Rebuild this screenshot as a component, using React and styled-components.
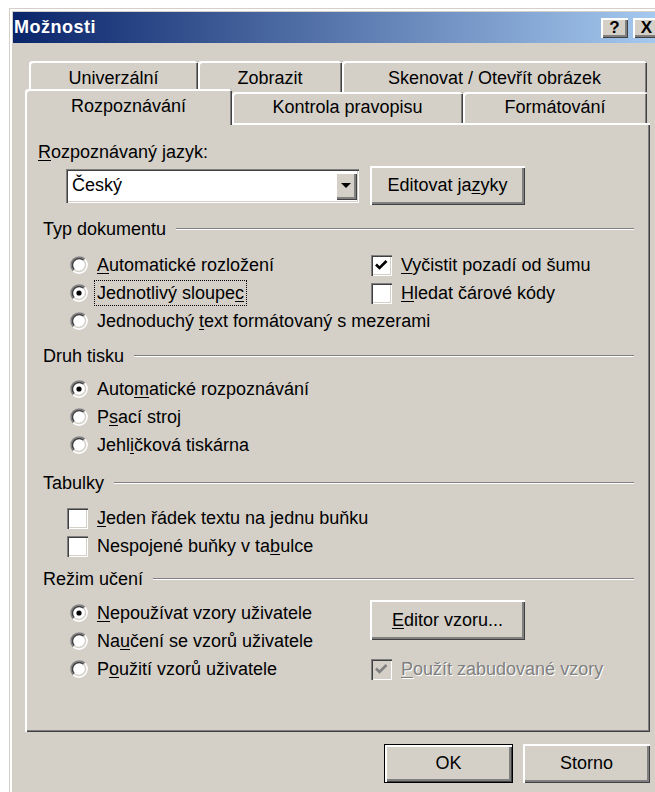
import React from 'react';
import styled, { createGlobalStyle } from 'styled-components';

const face = '#d4d0c8';
const shadow = '#808080';
const darkShadow = '#404040';

const GlobalStyle = createGlobalStyle`
  html, body {
    margin: 0;
    background: #fff;
    overflow: hidden;
  }

  body {
    font-family: "Liberation Sans", Arial, sans-serif;
    font-size: 18px;
    color: #000;
  }
`;

const raised = `
  box-shadow:
    inset 2px 2px 0 #fff,
    inset -1px -1px 0 ${darkShadow},
    inset -3px -3px 0 ${shadow};
`;

const sunken = `
  box-shadow:
    inset 1px 1px 0 ${shadow},
    inset 2px 2px 0 ${darkShadow},
    inset -1px -1px 0 #fff,
    inset -2px -2px 0 ${face};
`;

const Window = styled.div`
  width: 656px;
  height: 800px;
  margin: 8px 0 0 9px;
  box-sizing: border-box;
  border-top: 1px solid ${face};
  border-left: 1px solid ${face};
  box-shadow: inset 2px 2px 0 #fff;
  background: ${face};
  padding: 3px 3px 0 3px;
  display: flex;
  flex-direction: column;
`;

const TitleBar = styled.div`
  height: 31px;
  display: flex;
  align-items: center;
  padding: 0 2px 0 1px;
  background: linear-gradient(to right, #0a246a, #a6caf0);
  color: #fff;
  font-weight: bold;
`;

const Title = styled.span`
  flex: 1;
  letter-spacing: 0.5px;
`;

const CaptionButton = styled.div`
  width: 27px;
  height: 20px;
  margin-left: ${({ $gap }) => $gap || 0}px;
  display: flex;
  align-items: center;
  justify-content: center;
  background: ${face};
  color: #000;
  font-size: 17px;
  font-weight: bold;
  ${raised}
`;

const Body = styled.div`
  display: flex;
  flex-direction: column;
  padding: 18px 12px 0 12px;
`;

const TabRow = styled.div`
  display: flex;
  align-items: flex-end;
  padding-left: ${({ $indent }) => $indent || 0}px;
  margin-top: ${({ $overlap }) => ($overlap ? -3 : 0)}px;
`;

const Tab = styled.div`
  position: relative;
  z-index: ${({ $active }) => ($active ? 1 : 0)};
  width: ${({ $w }) => $w}px;
  height: ${({ $active }) => ($active ? 36 : 31)}px;
  margin-bottom: ${({ $active }) => ($active ? -2 : 0)}px;
  padding-bottom: ${({ $active }) => ($active ? 2 : 0)}px;
  padding-top: ${({ $back }) => ($back ? 3 : 0)}px;
  box-sizing: border-box;
  display: flex;
  align-items: center;
  justify-content: center;
  background: ${face};
  border-radius: 3px 3px 0 0;
  box-shadow:
    inset 2px 2px 0 #fff,
    inset -1px 0 0 ${darkShadow},
    inset -2px 0 0 ${shadow};
  white-space: nowrap;
`;

const Panel = styled.div`
  height: 609px;
  box-sizing: border-box;
  display: flex;
  flex-direction: column;
  padding: 17px 16px 0 13px;
  box-shadow:
    inset 2px 2px 0 #fff,
    inset -1px -1px 0 ${darkShadow},
    inset -2px -2px 0 ${shadow};
`;

const FieldLabel = styled.div`
  height: 24px;
  line-height: 24px;
`;

const ComboRow = styled.div`
  display: flex;
  align-items: center;
  gap: 11px;
  height: 39px;
  margin-top: 2px;
  padding-left: 28px;
`;

const Combo = styled.div`
  width: 293px;
  height: 34px;
  box-sizing: border-box;
  display: flex;
  align-items: center;
  padding: 3px 2px 3px 6px;
  background: #fff;
  ${sunken}
`;

const ComboText = styled.span`
  flex: 1;
`;

const DropButton = styled.div`
  width: 22px;
  height: 28px;
  display: flex;
  align-items: center;
  justify-content: center;
  background: ${face};
  ${raised}

  &::before {
    content: '';
    border-left: 5px solid transparent;
    border-right: 5px solid transparent;
    border-top: 5px solid #000;
  }
`;

const Button = styled.button`
  width: ${({ $w }) => $w}px;
  height: ${({ $h }) => $h || 39}px;
  margin-top: ${({ $top }) => $top || 0}px;
  flex: none;
  padding: 0;
  box-sizing: border-box;
  font: inherit;
  color: #000;
  background: ${face};
  border: ${({ $default }) => ($default ? '1px solid #000' : 'none')};
  ${raised}
`;

const GroupHeading = styled.div`
  display: flex;
  align-items: center;
  height: 24px;
  padding-left: 5px;
  margin-top: ${({ $top }) => $top}px;

  &::after {
    content: '';
    flex: 1;
    margin-left: 10px;
    border-top: 1px solid ${shadow};
    border-bottom: 1px solid #fff;
  }
`;

const Options = styled.div`
  display: grid;
  grid-template-columns: 304px 1fr;
  grid-auto-rows: ${({ $free }) => ($free ? 'auto' : '28px')};
  align-items: start;
  padding-left: 28px;
  margin-top: ${({ $top }) => $top}px;
`;

const Column = styled.div`
  display: flex;
  flex-direction: column;
`;

const Option = styled.div`
  display: flex;
  align-items: center;
  height: 28px;
  white-space: pre;
  grid-column: ${({ $wide }) => ($wide ? '1 / -1' : 'auto')};
  margin-top: ${({ $top }) => $top || 0}px;
  color: ${({ $disabled }) => ($disabled ? shadow : '#000')};
  text-shadow: ${({ $disabled }) => ($disabled ? '1px 1px 0 #fff' : 'none')};
`;

const Slot = styled.span`
  flex: none;
  width: 22px;
  margin-right: 9px;
  display: flex;
  justify-content: flex-end;
`;

const Box = styled.span`
  position: relative;
  width: 21px;
  height: 21px;
  box-sizing: border-box;
  background: ${({ $disabled }) => ($disabled ? face : '#fff')};
  ${sunken}

  svg {
    position: absolute;
    left: 0;
    top: 0;
  }
`;

const Focus = styled.span`
  margin-left: -3px;
  padding: 1px 2px;
  line-height: 22px;
  border: 1px dotted #000;
`;

const Key = styled.u`
  text-decoration-thickness: 1px;
  text-underline-offset: 2px;
`;

const Footer = styled.div`
  display: flex;
  justify-content: flex-end;
  gap: 10px;
  margin-top: 12px;
`;

// "&" marks the accelerator letter, as in a Windows resource string
function Caption({ text }) {
  const i = text.indexOf('&');
  if (i < 0) return <span>{text}</span>;
  return (
    <span>
      {text.slice(0, i)}
      <Key>{text[i + 1]}</Key>
      {text.slice(i + 2)}
    </span>
  );
}

function RadioMark({ checked }) {
  return (
    <svg width="18" height="18" viewBox="0 0 18 18">
      <circle cx="9" cy="9" r="8.5" fill="#fff" />
      <path d="M3.17 14.83A8.25 8.25 0 0 1 14.83 3.17" fill="none" stroke={shadow} strokeWidth="1.5" />
      <path d="M3.17 14.83A8.25 8.25 0 0 0 14.83 3.17" fill="none" stroke="#fff" strokeWidth="1.5" />
      <path d="M4.23 13.77A6.75 6.75 0 0 1 13.77 4.23" fill="none" stroke={darkShadow} strokeWidth="1.5" />
      <path d="M4.23 13.77A6.75 6.75 0 0 0 13.77 4.23" fill="none" stroke={face} strokeWidth="1.5" />
      {checked && <circle cx="9" cy="9" r="2.6" fill="#000" />}
    </svg>
  );
}

function CheckMark({ checked, disabled }) {
  return (
    <Box $disabled={disabled}>
      {checked && (
        <svg width="21" height="21" viewBox="0 0 21 21">
          <path d="M5 9.5l3.5 3.5 7-7" fill="none" stroke={disabled ? shadow : '#000'} strokeWidth="2.6" />
        </svg>
      )}
    </Box>
  );
}

function Radio({ label, checked, focused, wide }) {
  return (
    <Option $wide={wide}>
      <Slot><RadioMark checked={checked} /></Slot>
      {focused ? <Focus><Caption text={label} /></Focus> : <Caption text={label} />}
    </Option>
  );
}

function Check({ label, checked, disabled, top }) {
  return (
    <Option $disabled={disabled} $top={top}>
      <Slot><CheckMark checked={checked} disabled={disabled} /></Slot>
      <Caption text={label} />
    </Option>
  );
}

export default function App() {
  return (
    <>
      <GlobalStyle />
      <Window>
        <TitleBar>
          <Title>Možnosti</Title>
          <CaptionButton>?</CaptionButton>
          <CaptionButton $gap={5}>X</CaptionButton>
        </TitleBar>

        <Body>
          <TabRow $indent={4}>
            <Tab $w={169} $back>Univerzální</Tab>
            <Tab $w={144} $back>Zobrazit</Tab>
            <Tab $w={305} $back>Skenovat / Otevřít obrázek</Tab>
          </TabRow>
          <TabRow $overlap>
            <Tab $w={207} $active>Rozpoznávání</Tab>
            <Tab $w={231}>Kontrola pravopisu</Tab>
            <Tab $w={184}>Formátování</Tab>
          </TabRow>

          <Panel>
            <FieldLabel><Caption text="&Rozpoznávaný jazyk:" /></FieldLabel>
            <ComboRow>
              <Combo>
                <ComboText>Český</ComboText>
                <DropButton />
              </Combo>
              <Button $w={155}><Caption text="Editovat ja&zyky" /></Button>
            </ComboRow>

            <GroupHeading $top={12}>Typ dokumentu</GroupHeading>
            <Options $top={10}>
              <Radio label="&Automatické rozložení" />
              <Check label="&Vyčistit pozadí od šumu" checked />
              <Radio label="Jednotlivý sloupe&c" checked focused />
              <Check label="&Hledat čárové kódy" />
              <Radio label="Jednoduchý &text formátovaný s mezerami" wide />
            </Options>

            <GroupHeading $top={9}>Druh tisku</GroupHeading>
            <Options $top={7}>
              <Radio label="Auto&matické rozpoznávání" checked wide />
              <Radio label="P&sací stroj" wide />
              <Radio label="Jehl&ičková tiskárna" wide />
            </Options>

            <GroupHeading $top={12}>Tabulky</GroupHeading>
            <Options $top={9}>
              <Check label="&Jeden řádek textu na jednu buňku" />
              <span />
              <Check label="Nespojené buňky v ta&bulce" />
            </Options>

            <GroupHeading $top={7}>Režim učení</GroupHeading>
            <Options $top={8} $free>
              <Column>
                <Radio label="&Nepoužívat vzory uživatele" checked />
                <Radio label="Na&učení se vzorů uživatele" />
                <Radio label="P&oužití vzorů uživatele" />
              </Column>
              <Column>
                <Button $w={155} $h={40} $top={1}><Caption text="&Editor vzoru..." /></Button>
                <Check label="&Použít zabudované vzory" checked disabled top={15} />
              </Column>
            </Options>
          </Panel>

          <Footer>
            <Button $w={129} $default>OK</Button>
            <Button $w={127}>Storno</Button>
          </Footer>
        </Body>
      </Window>
    </>
  );
}
